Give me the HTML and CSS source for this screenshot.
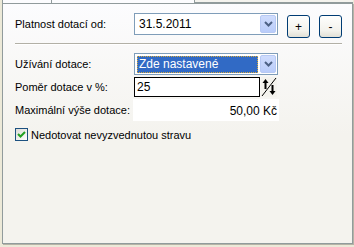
FILE: index.html
```html
<!DOCTYPE html>
<html lang="cs">
<head>
<meta charset="utf-8">
<title>Dotace</title>
<link rel="stylesheet" href="styles.css">
</head>
<body>
<div class="tabs">
  <div class="tab tab-a"></div>
  <div class="tab tab-sel"></div>
  <div class="tab tab-b"></div>
</div>
<div class="panel">
  <div class="row-date">
    <span class="lbl lbl-date">Platnost dotací od:</span>
    <div class="combo">
      <span class="combo-text">31.5.2011</span>
      <span class="drop"><svg width="9" height="6" viewBox="0 0 9 6"><polyline points="1,1 4.5,4.5 8,1" fill="none" stroke="#4d6185" stroke-width="2"/></svg></span>
    </div>
    <div class="btns">
      <span class="btn">+</span>
      <span class="btn">-</span>
    </div>
  </div>
  <div class="sep"></div>
  <div class="form">
    <span class="lbl">Užívání dotace:</span>
    <div class="combo">
      <span class="combo-sel">Zde nastavené</span>
      <span class="drop"><svg width="9" height="6" viewBox="0 0 9 6"><polyline points="1,1 4.5,4.5 8,1" fill="none" stroke="#4d6185" stroke-width="2"/></svg></span>
    </div>
    <span class="lbl">Poměr dotace v %:</span>
    <div class="spin">
      <span class="spin-input">25</span>
      <span class="spin-btn"><svg width="16" height="20" viewBox="0 0 16 20">
        <line x1="1" y1="19" x2="15" y2="1" stroke="#000" stroke-width="1"/>
        <polygon points="4.5,2 1.5,6 7.5,6" fill="#000"/>
        <rect x="3.5" y="5" width="2" height="7" fill="#000"/>
        <polygon points="11.5,18 8.5,14 14.5,14" fill="#000"/>
        <rect x="10.5" y="8" width="2" height="7" fill="#000"/>
      </svg></span>
    </div>
    <span class="lbl">Maximální výše dotace:</span>
    <div class="value">50,00 Kč</div>
  </div>
  <div class="check-row">
    <span class="cb"><svg width="11" height="11" viewBox="0 0 11 11"><polyline points="2,5 4.5,7.5 9,3" fill="none" stroke="#21a121" stroke-width="2"/></svg></span>
    <span class="lbl">Nedotovat nevyzvednutou stravu</span>
  </div>
</div>
</body>
</html>
```

FILE: styles.css
```css
html, body {
  margin: 0;
  padding: 0;
}
body {
  width: 354px;
  height: 247px;
  overflow: hidden;
  background: #ece9d8;
  font-family: "Liberation Sans", Arial, sans-serif;
  font-size: 11px;
  color: #000;
}
.tabs {
  display: flex;
  height: 3px;
  padding-left: 2px;
}
.tab {
  box-sizing: border-box;
  height: 3px;
}
.tab-a {
  width: 50px;
  background: #fcfcfe;
  border-left: 1px solid #919b9c;
  border-right: 1px solid #919b9c;
}
.tab-sel {
  width: 142px;
  background: #fcfcfe;
}
.tab-b {
  width: 159px;
  background: #f4f3ee;
  border-left: 1px solid #919b9c;
  border-bottom: 1px solid #919b9c;
}
.panel {
  box-sizing: border-box;
  margin-left: 2px;
  width: 351px;
  height: 241px;
  border: 1px solid #919b9c;
  box-shadow: 1px 1px 0 #b5b3a6;
  background: linear-gradient(#fcfcfe, #f4f3ee 55%);
  padding: 9px 0 0 12px;
}
.lbl {
  white-space: nowrap;
}
.row-date {
  display: flex;
  align-items: flex-start;
  height: 24px;
}
.lbl-date {
  width: 119px;
  line-height: 22px;
}
.combo {
  box-sizing: border-box;
  width: 144px;
  height: 22px;
  border: 1px solid #7f9db9;
  background: #fff;
  display: flex;
  align-items: center;
  padding: 0 1px 0 2px;
}
.combo-text {
  flex: 1;
  font-size: 12px;
  padding-left: 2px;
}
.combo-sel {
  flex: 1;
  box-sizing: border-box;
  height: 17px;
  line-height: 15px;
  background: #316ac5;
  color: #fff;
  font-size: 12px;
  padding-left: 1px;
  margin-right: 2px;
  border: 1px dotted #d7ab3e;
}
.drop {
  box-sizing: border-box;
  width: 16px;
  height: 18px;
  border: 1px solid #b7c9f4;
  border-radius: 2px;
  background: linear-gradient(#cfdcfd, #b9ccfa);
  display: flex;
  align-items: center;
  justify-content: center;
}
.btns {
  display: flex;
  gap: 9px;
  margin-left: 9px;
  margin-top: 2px;
}
.btn {
  box-sizing: border-box;
  width: 23px;
  height: 23px;
  border: 1px solid #003c74;
  border-radius: 3px;
  background: linear-gradient(#fefefd, #f3f2ec 70%, #e2e0d6);
  display: flex;
  align-items: center;
  justify-content: center;
  font-size: 12px;
}
.sep {
  width: 327px;
  height: 0;
  margin-top: 6px;
  border-top: 1px solid #b2b0a6;
  border-bottom: 1px solid #fff;
}
.form {
  display: grid;
  grid-template-columns: 119px 146px;
  grid-template-rows: 22px 20px 22px;
  row-gap: 2px;
  margin-top: 8px;
  align-items: center;
}
.spin {
  display: flex;
  gap: 1px;
  height: 20px;
}
.spin-input {
  box-sizing: border-box;
  width: 126px;
  height: 20px;
  border: 1px solid #000;
  background: #fff;
  font-size: 12px;
  line-height: 18px;
  padding-left: 2px;
}
.spin-btn {
  width: 16px;
  height: 20px;
  background: #f4f3ee;
}
.spin-btn svg {
  display: block;
}
.value {
  box-sizing: border-box;
  width: 146px;
  height: 22px;
  margin-left: -1px;
  background: #fff;
  text-align: right;
  font-size: 12px;
  line-height: 24px;
  padding-right: 2px;
}
.check-row {
  display: flex;
  align-items: center;
  gap: 3px;
  margin-top: 7px;
  height: 13px;
}
.cb {
  box-sizing: border-box;
  width: 13px;
  height: 13px;
  border: 1px solid #1c5180;
  background: linear-gradient(135deg, #dcdcd7, #fff);
  display: flex;
  align-items: center;
  justify-content: center;
}
.cb svg {
  display: block;
}
```
